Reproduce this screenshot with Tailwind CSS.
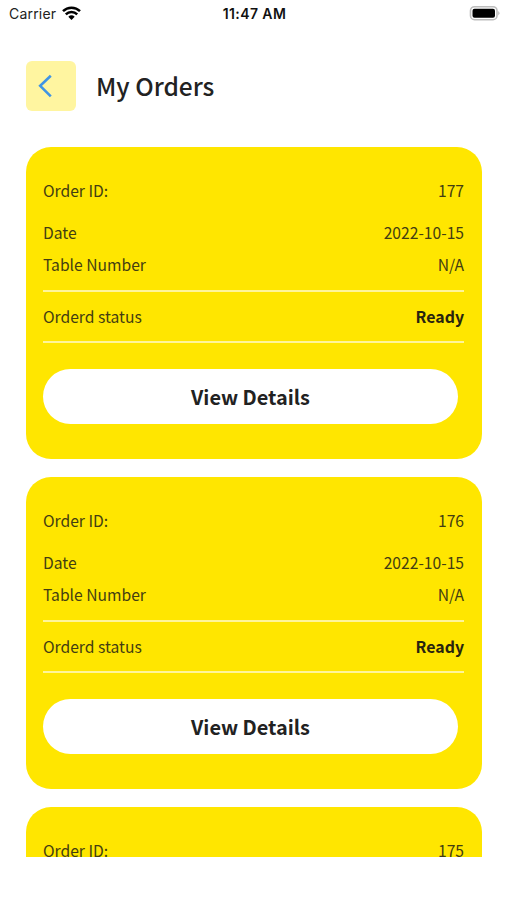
<!DOCTYPE html>
<html lang="en">
<head>
<meta charset="utf-8">
<title>My Orders</title>
<script src="https://cdn.jsdelivr.net/npm/@tailwindcss/browser@4"></script>
</head>
<body class="bg-white">
<div class="flex h-[900px] w-[507px] flex-col overflow-hidden font-['Noto_Sans_CJK_SC','Noto_Sans',sans-serif] text-[#222]">
  <header class="grid h-[27px] shrink-0 grid-cols-3 items-center pl-[9px] pr-[7px] font-['Inter','Liberation_Sans',sans-serif] text-[14px] text-[#222]">
    <div class="flex items-center gap-[6px]">
      <span class="tracking-[0.2px]">Carrier</span>
      <svg class="-mt-[1px] h-[14px] w-[19px]" viewBox="0 0 19 14" fill="none" stroke="#000" stroke-width="2.5">
        <path d="M1 5.1a12.2 12.2 0 0 1 17 0"/>
        <path d="M3.8 8.300a8.100 8.100 0 0 1 11.400 0"/>
        <path d="M6.3 10.8a4.8 4.8 0 0 1 6.4 0L9.5 14z" fill="#000" stroke="none"/>
      </svg>
    </div>
    <span class="text-center font-semibold tracking-[0.4px] text-[#111]">11:47 AM</span>
    <svg class="-mt-[1px] h-[16px] w-[31px] justify-self-end" viewBox="0 0 31 16">
      <rect x="1.500" y="1.7" width="26.500" height="13" rx="4" fill="#fff" stroke="#bdbdbd" stroke-width="1.6"/>
      <rect x="3.500" y="3.7" width="22.500" height="9" rx="2" fill="#000"/>
      <path d="M29.2 6q2.600 2.200 0 4.4z" fill="#bdbdbd"/>
    </svg>
  </header>
  <div class="mt-[34px] flex h-[50px] shrink-0 items-center gap-[20.500px] pl-[26px]">
    <button class="h-[49.500px] w-[49.500px] rounded-[6px] bg-[#fff5a0]" aria-label="Back">
      <svg class="h-[50px] w-[50px]" viewBox="0 0 50 50" fill="none" stroke="#4094e4" stroke-width="2.6"><path d="M24.8 14.7 14.2 24.800l10.600 10.600"/></svg>
    </button>
    <h1 class="text-[24.500px] leading-[36px] font-medium">My Orders</h1>
  </div>
  <main class="mt-[36.400px] flex h-[709.600px] shrink-0 flex-col gap-[18px] overflow-hidden pl-[26px]">
    <article class="h-[312px] w-[455.500px] shrink-0 rounded-[25px] bg-[#ffe600] pl-[17px] pr-[17.500px] pt-[31.400px] text-[15.650px] leading-[24px] text-[#433d12]">
      <div class="flex justify-between"><span>Order ID:</span><span>177</span></div>
      <div class="mt-[18px] flex justify-between"><span>Date</span><span>2022-10-15</span></div>
      <div class="mt-[8px] flex justify-between"><span>Table Number</span><span>N/A</span></div>
      <div class="mt-[13px] flex h-[53px] items-center justify-between border-y-2 border-[#fff59a] pt-[2px]"><span>Orderd status</span><b class="text-[15.900px] text-[#28240f]">Ready</b></div>
      <button class="mt-[26px] block h-[55px] w-[415px] rounded-full bg-white pt-[1px] text-[19.900px] font-bold text-[#222]">View Details</button>
    </article>
    <article class="h-[312px] w-[455.500px] shrink-0 rounded-[25px] bg-[#ffe600] pl-[17px] pr-[17.500px] pt-[31.400px] text-[15.650px] leading-[24px] text-[#433d12]">
      <div class="flex justify-between"><span>Order ID:</span><span>176</span></div>
      <div class="mt-[18px] flex justify-between"><span>Date</span><span>2022-10-15</span></div>
      <div class="mt-[8px] flex justify-between"><span>Table Number</span><span>N/A</span></div>
      <div class="mt-[13px] flex h-[53px] items-center justify-between border-y-2 border-[#fff59a] pt-[2px]"><span>Orderd status</span><b class="text-[15.900px] text-[#28240f]">Ready</b></div>
      <button class="mt-[26px] block h-[55px] w-[415px] rounded-full bg-white pt-[1px] text-[19.900px] font-bold text-[#222]">View Details</button>
    </article>
    <article class="h-[312px] w-[455.500px] shrink-0 rounded-[25px] bg-[#ffe600] pl-[17px] pr-[17.500px] pt-[31.400px] text-[15.650px] leading-[24px] text-[#433d12]">
      <div class="flex justify-between"><span>Order ID:</span><span>175</span></div>
    </article>
  </main>
</div>
</body>
</html>
